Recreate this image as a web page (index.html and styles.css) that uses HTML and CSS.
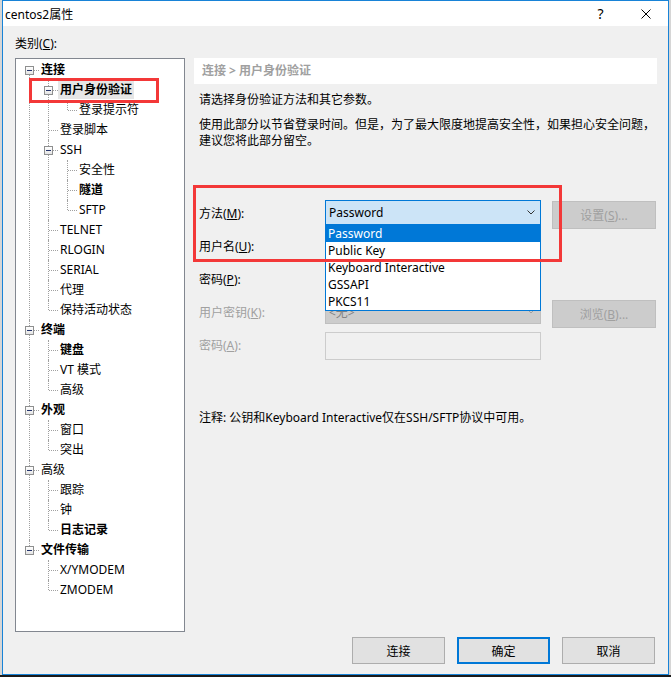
FILE: index.html
```html
<!DOCTYPE html>
<html lang="zh-CN">
<head>
<meta charset="utf-8">
<title>centos2属性</title>
<link rel="stylesheet" href="styles.css">
</head>
<body>
<div class="window">
  <div class="titlebar">
    <div class="title">centos2属性</div>
    <div class="tb-btn help">?</div>
    <div class="tb-btn close">
      <svg width="10" height="10" viewBox="0 0 10 10"><path d="M0.5 0.5 L9.5 9.5 M9.5 0.5 L0.5 9.5" stroke="#000" stroke-width="1" fill="none"/></svg>
    </div>
  </div>

  <div class="content">
    <div class="cat-label">类别(<u>C</u>):</div>

    <div class="tree-box">
      <ul class="tree">
        <li><span class="exp"></span><div class="row"><span class="lbl b">连接</span></div>
          <ul>
            <li><span class="exp"></span><div class="row"><span class="lbl b sel">用户身份验证</span></div>
              <ul>
                <li><div class="row"><span class="lbl">登录提示符</span></div></li>
              </ul>
            </li>
            <li><div class="row"><span class="lbl">登录脚本</span></div></li>
            <li><span class="exp"></span><div class="row"><span class="lbl">SSH</span></div>
              <ul>
                <li><div class="row"><span class="lbl">安全性</span></div></li>
                <li><div class="row"><span class="lbl b">隧道</span></div></li>
                <li><div class="row"><span class="lbl">SFTP</span></div></li>
              </ul>
            </li>
            <li><div class="row"><span class="lbl">TELNET</span></div></li>
            <li><div class="row"><span class="lbl">RLOGIN</span></div></li>
            <li><div class="row"><span class="lbl">SERIAL</span></div></li>
            <li><div class="row"><span class="lbl">代理</span></div></li>
            <li><div class="row"><span class="lbl">保持活动状态</span></div></li>
          </ul>
        </li>
        <li><span class="exp"></span><div class="row"><span class="lbl b">终端</span></div>
          <ul>
            <li><div class="row"><span class="lbl b">键盘</span></div></li>
            <li><div class="row"><span class="lbl">VT 模式</span></div></li>
            <li><div class="row"><span class="lbl">高级</span></div></li>
          </ul>
        </li>
        <li><span class="exp"></span><div class="row"><span class="lbl b">外观</span></div>
          <ul>
            <li><div class="row"><span class="lbl">窗口</span></div></li>
            <li><div class="row"><span class="lbl">突出</span></div></li>
          </ul>
        </li>
        <li><span class="exp"></span><div class="row"><span class="lbl">高级</span></div>
          <ul>
            <li><div class="row"><span class="lbl">跟踪</span></div></li>
            <li><div class="row"><span class="lbl">钟</span></div></li>
            <li><div class="row"><span class="lbl b">日志记录</span></div></li>
          </ul>
        </li>
        <li><span class="exp"></span><div class="row"><span class="lbl b">文件传输</span></div>
          <ul>
            <li><div class="row"><span class="lbl">X/YMODEM</span></div></li>
            <li><div class="row"><span class="lbl">ZMODEM</span></div></li>
          </ul>
        </li>
      </ul>
    </div>

    <div class="panel">
      <div class="crumb">连接 &gt; 用户身份验证</div>
      <div class="desc">
        <p>请选择身份验证方法和其它参数。</p>
        <p class="p2">使用此部分以节省登录时间。但是，为了最大限度地提高安全性，如果担心安全问题，<br>建议您将此部分留空。</p>
      </div>

      <div class="form">
        <div class="frow">
          <div class="flabel">方法(<u>M</u>):</div>
          <div class="combo active">
            <span class="combo-text">Password</span>
            <svg class="chev" width="8" height="5" viewBox="0 0 8 5"><path d="M0.5 0.5 L4 4 L7.5 0.5" stroke="#333" stroke-width="1" fill="none"/></svg>
            <div class="droplist">
              <div class="opt sel">Password</div>
              <div class="opt">Public Key</div>
              <div class="opt">Keyboard Interactive</div>
              <div class="opt">GSSAPI</div>
              <div class="opt">PKCS11</div>
            </div>
          </div>
          <div class="fbtn disabled">设置(<u>S</u>)...</div>
        </div>
        <div class="frow">
          <div class="flabel">用户名(<u>U</u>):</div>
          <div class="textbox"></div>
        </div>
        <div class="frow">
          <div class="flabel">密码(<u>P</u>):</div>
          <div class="textbox"></div>
        </div>
        <div class="frow">
          <div class="flabel dis">用户密钥(<u>K</u>):</div>
          <div class="combo off">
            <span class="combo-text">&lt;无&gt;</span>
            <svg class="chev" width="8" height="5" viewBox="0 0 8 5"><path d="M0.5 0.5 L4 4 L7.5 0.5" stroke="#a0a0a0" stroke-width="1" fill="none"/></svg>
          </div>
          <div class="fbtn disabled">浏览(<u>B</u>)...</div>
        </div>
        <div class="frow">
          <div class="flabel dis">密码(<u>A</u>):</div>
          <div class="textbox off tall"></div>
        </div>
      </div>

      <div class="note">注释: 公钥和Keyboard Interactive仅在SSH/SFTP协议中可用。</div>
    </div>

    <div class="footer">
      <button class="btn">连接</button>
      <button class="btn default">确定</button>
      <button class="btn">取消</button>
    </div>
  </div>

  <div class="annot annot-tree"></div>
  <div class="annot annot-form"></div>
</div>
</body>
</html>
```
FILE: styles.css
```css
html {
  background: linear-gradient(to bottom, #d6d6d6 675px, #1a1a1a 675px);
  height: 677px;
}
body {
  margin: 0;
  font-family: "Noto Sans", "Noto Sans CJK SC", sans-serif;
  font-size: 12px;
  color: #000;
}
u { text-underline-offset: 1px; }

.window {
  margin-left: 2px;
  width: 667px;
  height: 675px;
  box-sizing: border-box;
  border: 1px solid #1883d7;
  background: #f0f0f0;
  display: flex;
  flex-direction: column;
  position: relative;
}

.titlebar {
  flex: none;
  height: 25px;
  background: #fff;
  display: flex;
  align-items: center;
}
.title { flex: 1; padding-left: 2px; }
.tb-btn {
  width: 45px;
  height: 25px;
  display: flex;
  align-items: center;
  justify-content: center;
}
.help { font-size: 14px; }

.content {
  flex: 1;
  display: grid;
  grid-template-columns: 170px 1fr;
  grid-template-rows: auto 1fr auto;
  column-gap: 9px;
  padding: 10px 11px 10px 12px;
  min-height: 0;
}
.cat-label {
  grid-column: 1 / 3;
  line-height: 16px;
  margin-bottom: 6px;
}

/* tree */
.tree-box {
  border: 1px solid #828790;
  background: #fff;
  overflow: hidden;
}
.tree, .tree ul {
  list-style: none;
  margin: 0;
  padding: 0;
}
.tree { padding-top: 1px; }
.tree ul { padding-left: 19px; }
.tree li { position: relative; }
.tree li::before {
  content: "";
  position: absolute;
  left: 13px;
  top: 0;
  bottom: 0;
  border-left: 1px dotted #a0a0a0;
}
.tree li:last-child::before { bottom: auto; height: 10px; }
.tree > li:first-child::before { top: 10px; }
.tree li::after {
  content: "";
  position: absolute;
  left: 14px;
  top: 10px;
  width: 9px;
  border-top: 1px dotted #a0a0a0;
}
.exp {
  position: absolute;
  left: 9px;
  top: 6px;
  width: 9px;
  height: 9px;
  box-sizing: border-box;
  border: 1px solid #8e8f8f;
  background: linear-gradient(#ffffff, #e4e4e4);
  z-index: 1;
}
.exp::after {
  content: "";
  position: absolute;
  left: 1px;
  top: 3px;
  width: 5px;
  height: 1px;
  background: #23336b;
}
.row {
  height: 20px;
  padding-left: 23px;
  display: flex;
  align-items: center;
}
.lbl {
  padding: 0 2px;
  line-height: 18px;
  white-space: nowrap;
}
.lbl.b { font-weight: bold; }
.lbl.sel { background: #e6e6e6; }

/* right panel */
.panel {
  display: flex;
  flex-direction: column;
}
.crumb {
  height: 26px;
  line-height: 26px;
  background: #fff;
  color: #a0a0a0;
  font-weight: bold;
  padding-left: 8px;
}
.desc {
  margin-top: 8px;
  padding-left: 5px;
  line-height: 16px;
}
.desc p { margin: 0; white-space: nowrap; }
.desc .p2 { margin-top: 9px; }

.form {
  margin-top: 48px;
  padding-left: 5px;
}
.frow {
  display: flex;
  align-items: flex-start;
  height: 33px;
}
.flabel {
  width: 126px;
  line-height: 33px;
}
.flabel.dis { color: #a0a0a0; }

.combo {
  position: relative;
  width: 216px;
  height: 25px;
  margin-top: 3px;
  box-sizing: border-box;
  border: 1px solid #adadad;
  display: flex;
  align-items: center;
  justify-content: space-between;
}
.combo-text { padding-left: 3px; }
.chev { margin-right: 5px; }
.combo.active {
  background: #cce4f7;
  border-color: #0078d7;
}
.combo.off {
  background: #cccccc;
  border-color: #bfbfbf;
  color: #838383;
}
.droplist {
  position: absolute;
  left: -1px;
  top: 23px;
  width: 216px;
  box-sizing: border-box;
  border: 1px solid #0078d7;
  background: #fff;
  z-index: 2;
}
.opt {
  height: 17px;
  line-height: 17px;
  padding-left: 2px;
  white-space: nowrap;
}
.opt.sel { background: #0078d7; color: #fff; }

.textbox {
  width: 216px;
  height: 25px;
  margin-top: 3px;
  box-sizing: border-box;
  border: 1px solid #7a7a7a;
  background: #fff;
}
.textbox.off {
  background: #f0f0f0;
  border-color: #cccccc;
}
.textbox.tall { height: 28px; }

.fbtn {
  margin-left: 11px;
  margin-top: 4px;
  width: 104px;
  height: 28px;
  box-sizing: border-box;
  border: 1px solid #adadad;
  background: #e1e1e1;
  display: flex;
  align-items: center;
  justify-content: center;
}
.fbtn.disabled {
  background: #cccccc;
  border-color: #bfbfbf;
  color: #a0a0a0;
}

.note {
  margin-top: 48px;
  padding-left: 5px;
  line-height: 16px;
  white-space: nowrap;
}

.footer {
  grid-column: 1 / 3;
  display: flex;
  justify-content: flex-end;
  gap: 12px;
  margin-top: 5px;
  padding-right: 2px;
}
.btn {
  width: 93px;
  height: 27px;
  box-sizing: border-box;
  border: 1px solid #adadad;
  background: #e1e1e1;
  font: inherit;
  color: #000;
  padding: 0;
}
.btn.default { border: 2px solid #0078d7; }

/* annotation overlays */
.annot {
  position: absolute;
  box-sizing: border-box;
  border: 3px solid #f33838;
  z-index: 5;
  pointer-events: none;
}
.annot-tree { left: 26px; top: 77px; width: 130px; height: 25px; }
.annot-form { left: 190px; top: 184px; width: 369px; height: 77px; }
```
